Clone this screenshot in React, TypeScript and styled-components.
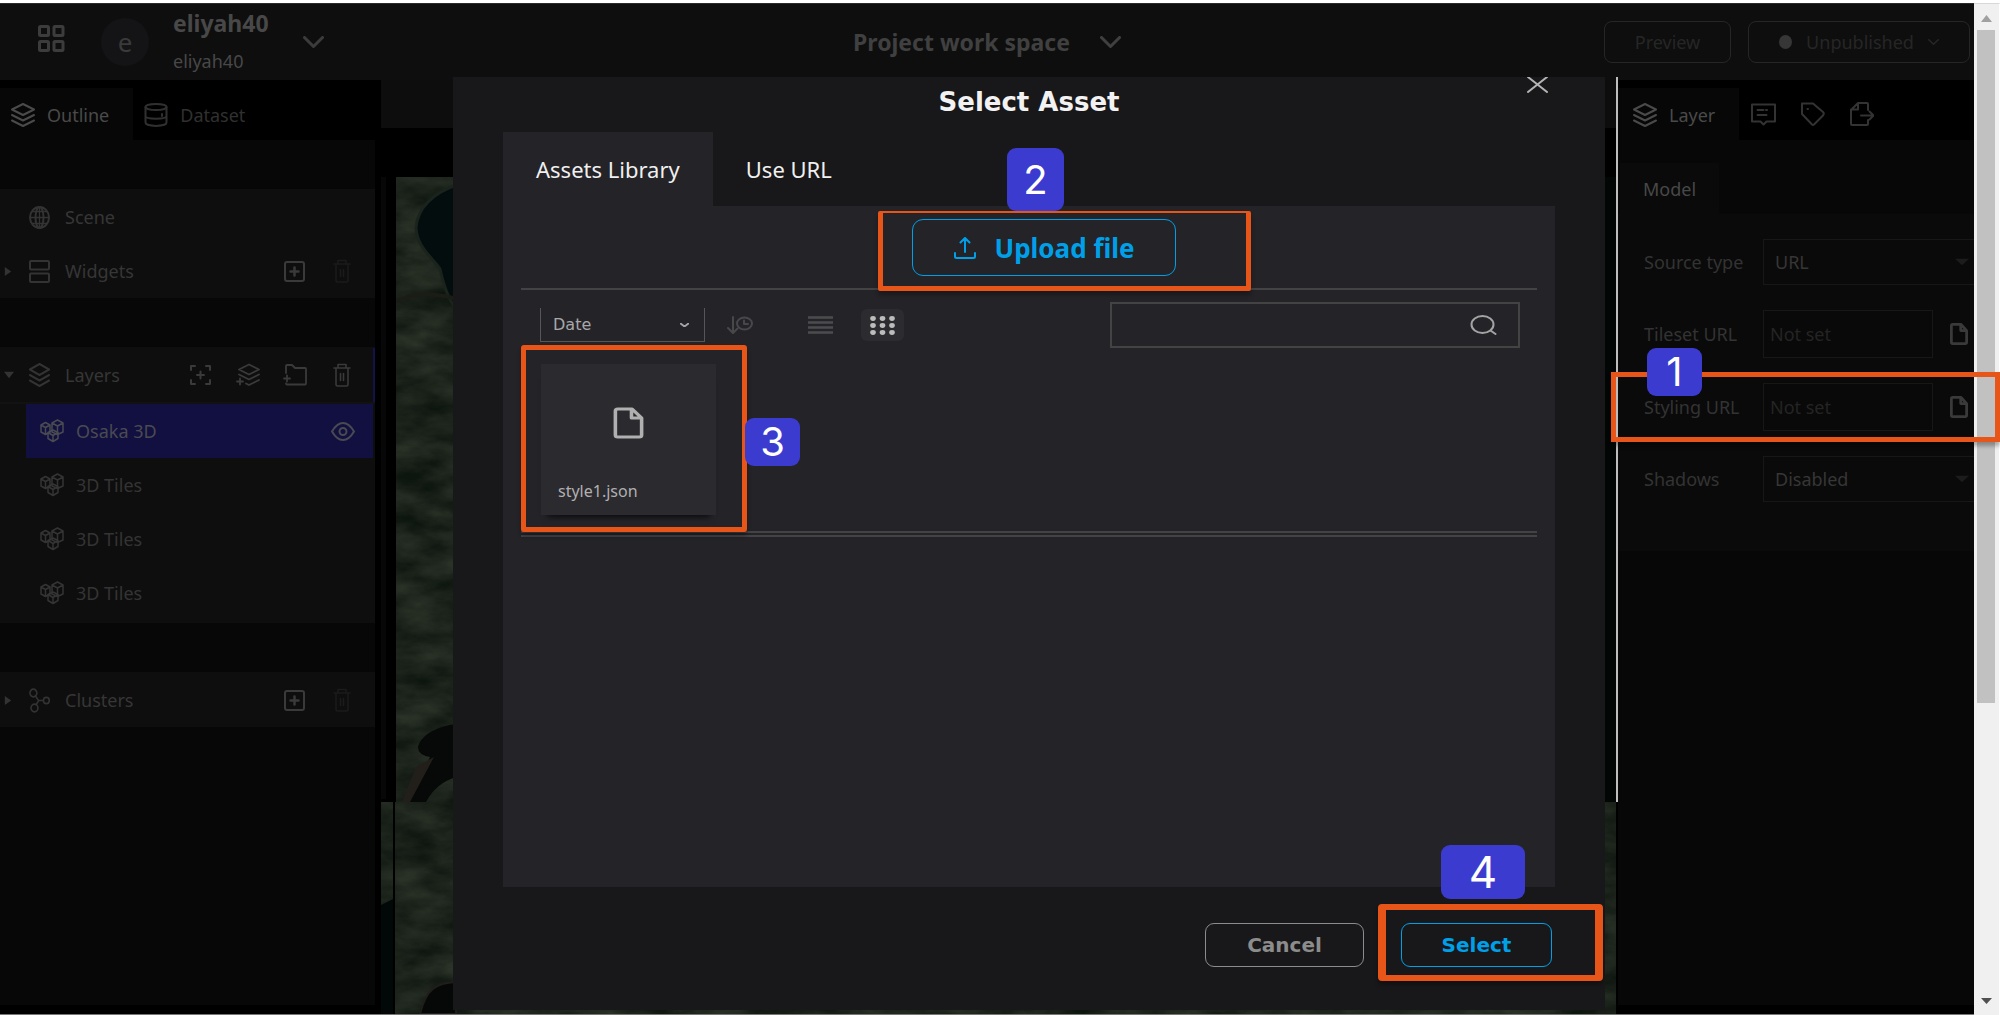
import React from 'react';
import styled, { createGlobalStyle, css } from 'styled-components';

const sans = `'Noto Sans', 'Open Sans', sans-serif`;
const wide = `'DejaVu Sans', 'Noto Sans', sans-serif`;
const orange = '#e85518';
const blue = '#00a0e8';

const GlobalStyle = createGlobalStyle`
  *, *::before, *::after { box-sizing: border-box; }
  body { margin: 0; background: #fff; font-family: ${sans}; }
  button, input, select { font-family: inherit; margin: 0; }
  button { padding: 0; border: 0; background: none; color: inherit; }
  svg { display: block; flex: none; }
`;

/* ---------- page frame ---------- */

const Page = styled.div`
  display: flex;
  min-height: 100vh;
  padding-top: 3px;
`;

const Editor = styled.div`
  position: relative;
  display: flex;
  flex: 1;
  min-width: 0;
  flex-direction: column;
  border-top: 1px solid #2b2b2b;
  border-bottom: 1px solid #777;
  background: #000;
`;

const ScrollTrack = styled.div`
  display: flex;
  flex: 0 0 26px;
  flex-direction: column;
  align-items: center;
  justify-content: space-between;
  padding: 11px 4px 11px 3px;
  border-top: 1px solid #d8d8d8;
  border-right: 1px solid #fff;
  background: #f0f0f0;
`;

const ScrollThumb = styled.div`
  flex: 0 0 68%;
  width: 100%;
  margin: 8px 0 auto;
  background: #c1c1c1;
`;

/* ---------- header ---------- */

const Header = styled.header`
  display: grid;
  grid-template-columns: 1fr auto 1fr;
  align-items: center;
  height: 76px;
  padding: 0 4px;
  background: #0e0e0e;
`;

const HeaderSide = styled.div<{ $end?: boolean }>`
  display: flex;
  align-items: center;
  justify-content: ${(p) => (p.$end ? 'flex-end' : 'flex-start')};
  gap: ${(p) => (p.$end ? '17px' : '0')};
  color: #3c3c3c;
`;

const HomeButton = styled.button`
  margin: 0 0 8px 34px;
`;

const Avatar = styled.span`
  display: flex;
  align-items: center;
  justify-content: center;
  width: 48px;
  height: 48px;
  margin: 0 24px 0 36px;
  border-radius: 50%;
  background: #141417;
  color: #3a3a3a;
  font-size: 26px;
`;

const Names = styled.div`
  display: flex;
  flex-direction: column;
  margin-right: 34px;
  color: #484848;
  font-size: 18px;
  line-height: 38px;

  strong {
    font-size: 23px;
  }
`;

const ProjectName = styled.h1`
  display: flex;
  align-items: center;
  gap: 30px;
  margin: 0;
  color: #404040;
  font-size: 23px;
  line-height: 32px;
`;

const HeaderButton = styled.button<{ $width: number }>`
  display: flex;
  align-items: center;
  justify-content: center;
  gap: 14px;
  width: ${(p) => p.$width}px;
  height: 42px;
  border: 1px solid #262626;
  border-radius: 8px;
  color: #262626;
  font-size: 18px;
`;

const Dot = styled.i`
  width: 13px;
  height: 14px;
  border-radius: 50%;
  background: #363636;
`;

/* ---------- workspace ---------- */

const Workspace = styled.div`
  display: flex;
  flex: 1;
`;

const Sidebar = styled.aside`
  flex: 0 0 381px;
  padding: 0 6px 9px 0;
  display: flex;
  flex-direction: column;
`;

const Inspector = styled.aside`
  position: relative;
  display: flex;
  flex: 0 0 358px;
  flex-direction: column;
  padding: 0 0 9px 2px;

  &::before {
    content: '';
    position: absolute;
    left: 0;
    top: -3px;
    width: 2px;
    height: 725px;
    background: #bdbdbd;
  }
`;

const PanelTabs = styled.nav`
  display: flex;
  height: 60px;
  padding-top: 8px;
`;

const PanelTab = styled.button<{ $active?: boolean; $indent?: number }>`
  display: flex;
  align-items: center;
  gap: 12px;
  padding: 2px 24px 0 ${(p) => p.$indent ?? 11}px;
  background: ${(p) => (p.$active ? '#070707' : 'transparent')};
  color: ${(p) => (p.$active ? '#4a4a4a' : '#303030')};
  font-size: 18px;
`;

const IconTab = styled.button`
  display: flex;
  align-items: center;
  justify-content: center;
  width: 49px;
  color: #333;
`;

const PanelBody = styled.div<{ $top: number }>`
  display: flex;
  flex: 1;
  flex-direction: column;
  gap: 49px;
  padding-top: ${(p) => p.$top}px;
  background: #070707;
`;

const Group = styled.section`
  display: flex;
  flex-direction: column;
  padding-top: 1px;
  background: #0e0e0e;
`;

const TreeRow = styled.div<{ $accent?: boolean }>`
  display: flex;
  align-items: center;
  height: 54px;
  padding: 0 8px 0 4px;
  border-right: 2px solid ${(p) => (p.$accent ? '#14124a' : 'transparent')};
  color: #333;
  font-size: 18px;
`;

const Caret = styled.span`
  width: 25px;
`;

const TreeLabel = styled.span`
  flex: 1;
  margin-left: 15px;
  color: #363636;
`;

const RowButton = styled.button<{ $dim?: boolean }>`
  display: flex;
  align-items: center;
  justify-content: center;
  width: 47px;
  height: 40px;
  color: ${(p) => (p.$dim ? '#1b1b1b' : '#3a3a3a')};
`;

const LayerList = styled.ul`
  margin: 0;
  padding: 0 2px 3px 26px;
  border-top: 2px solid #121212;
  list-style: none;
`;

const LayerItem = styled.li<{ $selected?: boolean }>`
  display: flex;
  align-items: center;
  gap: 12px;
  height: 54px;
  padding: 0 18px 0 14px;
  background: ${(p) => (p.$selected ? '#111040' : 'transparent')};
  color: ${(p) => (p.$selected ? '#4a4a52' : '#343434')};
  font-size: 18px;

  span {
    flex: 1;
  }
`;

const Canvas = styled.main`
  display: flex;
  flex: 1;
  min-width: 0;
  flex-direction: column;
`;

const CanvasBar = styled.div`
  height: 48px;
  margin-bottom: 49px;
  background: #0d0d0d;
`;

const MapFrame = styled.div`
  display: flex;
  flex: 1;

  svg {
    flex: 1;
    width: 100%;
    height: 100%;
  }
`;

/* ---------- inspector form ---------- */

const ModelTab = styled.button`
  height: 51px;
  margin-left: 2px;
  padding: 0 23px;
  background: #0a0a0a;
  color: #484848;
  font-size: 18px;
`;

const Fields = styled.div`
  display: flex;
  flex-direction: column;
  gap: 25px;
  padding: 25px 0 49px 26px;
  background: #0a0a0a;
`;

const Field = styled.div`
  position: relative;
  display: flex;
  align-items: center;
  color: #333;
  font-size: 18px;

  label {
    flex: 0 0 119px;
  }
`;

const FieldInput = styled.input`
  width: 170px;
  height: 48px;
  margin-right: 17px;
  padding: 0 6px;
  border: 1px solid #171717;
  background: #090909;
  color: #333;
  font-size: 18px;

  &::placeholder {
    color: #242424;
    opacity: 1;
  }
`;

const FileButton = styled.button`
  color: #3a3a3a;
`;

const PanelSelectBox = styled.div`
  display: flex;
  flex: 1;
  align-items: center;
  height: 46px;
  padding-right: 5px;
  border: 1px solid #171717;
  border-right: 0;
  color: #1c1c1c;

  select {
    flex: 1;
    min-width: 0;
    padding: 0 11px;
    border: 0;
    outline: 0;
    appearance: none;
    background: transparent;
    color: #363636;
    font-size: 18px;
  }
`;

/* ---------- dialog ---------- */

const Dialog = styled.section`
  position: absolute;
  inset: 73px 369px 4px 453px;
  display: flex;
  flex-direction: column;
  background: #18181a;
`;

const DialogHeader = styled.div`
  display: grid;
  grid-template-columns: 1fr auto 1fr;
  height: 55px;

  h2 {
    grid-column: 2;
    margin: 0;
    color: #f2f2f2;
    font-family: ${wide};
    font-size: 26px;
    line-height: 50px;
  }
`;

const CloseButton = styled.button`
  justify-self: end;
  align-self: start;
  margin-right: 56px;
  color: #b4b4b4;
`;

const DialogTabs = styled.div`
  display: flex;
  height: 74px;
  padding-left: 50px;
`;

const DialogTab = styled.button<{ $active?: boolean }>`
  padding: 0 33px;
  background: ${(p) => (p.$active ? '#242328' : 'transparent')};
  color: #f0f0f0;
  font-size: 22px;
`;

const DialogBody = styled.div`
  display: flex;
  flex: 1;
  flex-direction: column;
  margin: 0 50px;
  padding: 0 18px;
  background: #242328;
`;

const UploadRow = styled.div`
  display: flex;
  justify-content: center;
  height: 84px;
  padding: 13px 0 0 30px;
  border-bottom: 2px solid #434346;
`;

const Anchor = styled.div`
  position: relative;
  align-self: flex-start;
`;

const outlined = css`
  display: flex;
  align-items: center;
  justify-content: center;
  border: 1px solid currentColor;
  font-weight: 700;
`;

const UploadButton = styled.button`
  ${outlined}
  gap: 19px;
  width: 264px;
  height: 57px;
  border-radius: 11px;
  color: ${blue};
  font-size: 26px;
`;

const Toolbar = styled.div`
  display: flex;
  align-items: center;
  padding: 12px 17px 0 19px;
`;

const SortBox = styled.div`
  display: flex;
  align-items: center;
  width: 165px;
  height: 34px;
  margin-right: 22px;
  padding-right: 15px;
  border: 1px solid #55555a;
  border-top: 0;
  color: #a5a5a5;

  select {
    flex: 1;
    padding: 0 0 0 12px;
    border: 0;
    appearance: none;
    background: transparent;
    color: #a8a8a8;
    font-size: 16px;
    font-family: ${wide};
  }
`;

const ViewButtons = styled.div`
  display: flex;
  gap: 19px;
`;

const ToolButton = styled.button<{ $active?: boolean }>`
  display: flex;
  align-items: center;
  justify-content: center;
  width: 43px;
  height: 32px;
  border-radius: 6px;
  background: ${(p) => (p.$active ? '#2c2b30' : 'transparent')};
  color: ${(p) => (p.$active ? '#bcbcbc' : '#4c4c4e')};
`;

const SortOrder = styled.button`
  margin-right: 46px;
  color: #48484b;
`;

const SearchBox = styled.label`
  display: flex;
  align-items: center;
  width: 410px;
  height: 46px;
  margin-left: auto;
  padding-right: 21px;
  border: 2px solid #434344;
  color: #a4a4a4;

  input {
    flex: 1;
    min-width: 0;
    padding: 0 12px;
    border: 0;
    outline: 0;
    background: transparent;
    color: #ccc;
    font-size: 18px;
  }
`;

const AssetGrid = styled.div`
  display: flex;
  padding: 16px 20px;
  border-bottom: 6px double #434346;
`;

const AssetCard = styled.button`
  display: flex;
  flex-direction: column;
  align-items: center;
  width: 175px;
  height: 151px;
  padding: 43px 17px 12px;
  background: #2b2a2f;
  box-shadow: 0 8px 6px -6px rgba(0, 0, 0, 0.7);
  color: #b0b0b0;
  font-size: 16px;
  line-height: 24px;

  span {
    align-self: flex-start;
    margin-top: auto;
  }
`;

const DialogFooter = styled.div`
  display: flex;
  justify-content: flex-end;
  gap: 37px;
  height: 123px;
  padding: 36px 53px 0 0;
`;

const FooterButton = styled.button<{ $primary?: boolean }>`
  ${outlined}
  width: ${(p) => (p.$primary ? 151 : 159)}px;
  height: 44px;
  border-radius: 9px;
  color: ${(p) => (p.$primary ? blue : '#8c8c8c')};
  font-family: ${wide};
  font-size: 20px;
`;

/* ---------- step marks ---------- */

const Highlight = styled.span<{ $inset: string; $width?: string; $radius?: number }>`
  position: absolute;
  inset: ${(p) => p.$inset};
  border: solid ${orange};
  border-width: ${(p) => p.$width ?? '5px'};
  border-radius: ${(p) => p.$radius ?? 0}px;
  box-shadow: 0 4px 4px rgba(0, 0, 0, 0.3);
  pointer-events: none;
`;

const Badge = styled.span<{ $left: number; $top: number; $w: number; $h: number; $size?: number }>`
  position: absolute;
  left: ${(p) => p.$left}px;
  top: ${(p) => p.$top}px;
  display: flex;
  align-items: center;
  justify-content: center;
  width: ${(p) => p.$w}px;
  height: ${(p) => p.$h}px;
  border-radius: 9px;
  background: #3c3bd0;
  color: #fff;
  font: 400 ${(p) => p.$size ?? 40}px / 1 Inter, Roboto, sans-serif;
`;

/* ---------- icons ---------- */

type IconProps = { w: number; h: number; box?: string; sw?: number; children: React.ReactNode };
const Icon = ({ w, h, box, sw = 2, children }: IconProps) => (
  <svg width={w} height={h} viewBox={box ?? `0 0 ${w} ${h}`} preserveAspectRatio="none" fill="none" stroke="currentColor" strokeWidth={sw} strokeLinecap="round" strokeLinejoin="round" aria-hidden="true">
    {children}
  </svg>
);

const Dashboard = () => (
  <Icon w={27} h={27} sw={3}>
    <rect x="1.5" y="1.5" width="9" height="9" rx="1" />
    <rect x="16" y="1.5" width="9" height="9" rx="1" />
    <rect x="1.5" y="16.5" width="9" height="9" rx="1" />
    <rect x="16" y="16.5" width="9" height="9" rx="1" />
  </Icon>
);
const Chevron = ({ w = 21, h = 12, sw = 3 }) => (
  <Icon w={w} h={h} box="0 0 21 12" sw={sw}>
    <path d="M1.5 1.5 10.5 10.5 19.5 1.5" />
  </Icon>
);
const Layers = ({ w = 24, h = 24 }) => (
  <Icon w={w} h={h} box="0 0 24 24">
    <path d="M12 1 23 6.500 12 12 1 6.500Z" />
    <path d="M1 12 12 17.500 23 12M1 17.500 12 23 23 17.500" />
  </Icon>
);
const Database = () => (
  <Icon w={24} h={24}>
    <ellipse cx="12" cy="4" rx="10.500" ry="3" />
    <path d="M1.500 4v15.500c0 4.500 21 4.500 21 0V4M1.500 13c0 3.500 21 3.500 21 0M18 11v2" />
  </Icon>
);
const Globe = () => (
  <Icon w={21} h={23}>
    <ellipse cx="10.500" cy="11.500" rx="9.500" ry="10.500" />
    <ellipse cx="10.500" cy="11.500" rx="4" ry="10.500" />
    <path d="M1 11.500h19M10.500 1v21M3 5.500h15M3 17.500h15" strokeWidth="1.300" />
  </Icon>
);
const Widgets = () => (
  <Icon w={21} h={23}>
    <rect x="1" y="1" width="19" height="8.500" rx="1" />
    <rect x="1" y="13.500" width="19" height="8.500" rx="1" />
  </Icon>
);
const PlusBox = () => (
  <Icon w={21} h={21}>
    <rect x="1" y="1" width="19" height="19" rx="2" />
    <path d="M10.500 6.500v8M6.500 10.500h8" strokeWidth="2.500" />
  </Icon>
);
const Trash = () => (
  <Icon w={18} h={24}>
    <path d="M1 5h16M5 5V1.500h8V5M3 5v16.500q0 1.500 1.500 1.500h9q1.500 0 1.500-1.500V5M7.500 10.500v7M10.500 10.500v7" strokeWidth="1.600" />
  </Icon>
);
const Frame = () => (
  <Icon w={21} h={20}>
    <path d="M1 5V1h4M16 1h4v4M20 15v4h-4M5 19H1v-4M10.500 6.500v7M7 10h7" />
  </Icon>
);
const LayerPlus = () => (
  <Icon w={24} h={24} sw={1.8}>
    <path d="M13 1.500 23 6.500 13 11.500 3 6.500ZM3 11.500 13 16.500 23 11.500M10 20.500l3 1.500 10-5M1 18.500h6M4 15.500v6" />
  </Icon>
);
const FolderPlus = () => (
  <Icon w={24} h={22} sw={1.8}>
    <path d="M3 9V2q0-1 1-1h5l3 3h10q1 0 1 1v14.500q0 1-1 1H4q-1 0-1-1M1 14.500h6M4 11.500v6" />
  </Icon>
);
const Tiles = () => (
  <Icon w={24} h={24} sw={1.5}>
    <path d="M5.500 3.500 10 6v7l-4.500 2.500L1 13V6ZM1 6l4.500 2.500L10 6M5.500 8.500v7" />
    <path d="M17.500 1 23 4v9l-5.500 2.500L12 13V4ZM12 4l5.500 3L23 4M17.500 7v8" />
    <path d="M13 11l5 2.500v6L13 22.500l-5-3v-6ZM8 13.500l5 3 5-3M13 16.500v6" />
  </Icon>
);
const Eye = () => (
  <Icon w={24} h={19}>
    <path d="M1 9.500Q6 1 12 1t11 8.500Q18 18 12 18T1 9.500Z" />
    <circle cx="12" cy="9.500" r="3.500" />
  </Icon>
);
const Cluster = () => (
  <Icon w={21} h={25} box="0 0 23 25" sw={1.7}>
    <circle cx="4.800" cy="5" r="3.800" />
    <circle cx="6" cy="20" r="3.800" />
    <circle cx="19" cy="12.500" r="3.200" />
    <path d="M7 8l3.500 4.500h5M10.500 12.500 8 16.500" />
  </Icon>
);
const Triangle = ({ down = false, w = 8, h = 9 }) => (
  <svg width={down ? h + 1 : w} height={down ? w : h} viewBox="0 0 10 10" preserveAspectRatio="none" fill="currentColor" aria-hidden="true">
    <path d={down ? 'M0 1h10L5 9Z' : 'M1 0l8 5-8 5Z'} />
  </svg>
);
const Comment = () => (
  <Icon w={25} h={24}>
    <path d="M1 2.500h23v17h-8.500l-3 3-3-3H1ZM6.500 8h6M15 8h1M6.500 13h9" />
  </Icon>
);
const Tag = () => (
  <Icon w={24} h={24}>
    <path d="M1 1.500h11L22 10q1.500 1.500 0 3.500L13 22.500Q12 23.500 11 22.500L1 12ZM6.500 7h.5" />
  </Icon>
);
const Export = () => (
  <Icon w={24} h={24}>
    <path d="M18 18v4q0 1-1 1H2q-1 0-1-1V8l7-7h9q1 0 1 1v6M8 1v6.500H1M11 13.500h12M19.500 9.500l4 4-4 4" />
  </Icon>
);
const FileIcon = ({ w = 18, h = 22, sw = 4 }) => (
  <Icon w={w} h={h} box="0 0 26 32" sw={sw}>
    <path d="M4 2h12L24 11v17q0 2-2 2H4q-2 0-2-2V4Q2 2 4 2ZM15.500 2v9h8" />
  </Icon>
);
const Upload = () => (
  <Icon w={22} h={22}>
    <path d="M1 16v3.500q0 1.500 1.500 1.500h17q1.500 0 1.500-1.500V16M11 15V1.500M6.500 5.500 11 1l4.500 4.500" />
  </Icon>
);
const SortClock = () => (
  <Icon w={26} h={18}>
    <path d="M6 1v15M1 12l5 5 4.500-4.500" />
    <ellipse cx="17.500" cy="7.500" rx="7.500" ry="6" />
    <path d="M17 4.500v3.500h4" />
  </Icon>
);
const ListLines = () => (
  <Icon w={25} h={18}>
    <path d="M0 1.500h25M0 6.500h25M0 11.500h25M0 16.500h25" strokeLinecap="butt" strokeWidth="2.500" />
  </Icon>
);
const DotGrid = () => (
  <svg width="25" height="19" viewBox="0 0 25 19" fill="currentColor" aria-hidden="true">
    {[2.5, 9.5, 16.5].map((y) => [3, 12.5, 22].map((x) => <ellipse key={`${x}-${y}`} cx={x} cy={y} rx="2.800" ry="2.400" />))}
  </svg>
);
const Search = () => (
  <Icon w={27} h={20}>
    <ellipse cx="12.500" cy="9.500" rx="11" ry="8.500" />
    <path d="M20.500 15.500 25.500 19" />
  </Icon>
);
const Close = () => (
  <Icon w={23} h={16}>
    <path d="M2 0 21 15M21 0 2 15" />
  </Icon>
);

const SatelliteMap = () => (
  <svg viewBox="-15 0 1235 837" preserveAspectRatio="xMinYMin slice" aria-hidden="true">
    <defs>
      <filter id="terrain" x="0" y="0" width="100%" height="100%">
        <feTurbulence type="fractalNoise" baseFrequency="0.020 0.045" numOctaves="5" seed="7" />
        <feColorMatrix values="0 0 0 0 0.160  0 0 0 0 0.180  0 0 0 0 0.120  1 0 0 0 -0.200" />
      </filter>
    </defs>
    <rect x="-15" width="1235" height="837" fill="#0d150f" />
    <rect x="-15" width="1235" height="837" filter="url(#terrain)" opacity="0.500" />
    <path d="M60 8C38 16 22 30 20 50C20 70 38 82 44 92C48 110 52 122 60 132Z" fill="#040d0e" stroke="#1b241c" strokeWidth="3" />
    <path d="M0 124Q28 112 60 122" fill="none" stroke="#1c1c16" strokeWidth="4" />
    <path d="M60 547C44 549 26 556 22 570Q22 578 34 580L12 625H30Q40 606 60 600Z" fill="#060907" />
    <path d="M38 580 14 625H6L20 590Z" fill="#221f1b" />
    <path d="M60 805C40 806 30 812 24 837H60Z" fill="#050807" stroke="#201e1a" strokeWidth="2" />
    <rect x="1145" width="75" height="625" fill="#020705" />
    <rect x="-15" width="15" height="625" fill="#000" />
    <rect x="-15" width="5" height="622" fill="#070707" />
    <path d="M-15 728-3 722V837H-15Z" fill="#020807" />
    <rect x="-3" y="625" width="2" height="212" fill="#000" />
  </svg>
);

/* ---------- sections ---------- */

const layerNames = ['Osaka 3D', '3D Tiles', '3D Tiles', '3D Tiles'];

const OutlinePanel = () => (
  <Sidebar>
    <PanelTabs>
      <PanelTab $active><Layers /> Outline</PanelTab>
      <PanelTab><Database /> Dataset</PanelTab>
    </PanelTabs>
    <PanelBody $top={49}>
      <Group>
        <TreeRow><Caret /><Globe /><TreeLabel>Scene</TreeLabel></TreeRow>
        <TreeRow>
          <Caret><Triangle /></Caret><Widgets /><TreeLabel>Widgets</TreeLabel>
          <RowButton aria-label="Add widget"><PlusBox /></RowButton>
          <RowButton $dim aria-label="Delete widget"><Trash /></RowButton>
        </TreeRow>
      </Group>
      <Group>
        <TreeRow $accent>
          <Caret><Triangle down /></Caret><Layers w={21} /><TreeLabel>Layers</TreeLabel>
          <RowButton aria-label="Frame layer"><Frame /></RowButton>
          <RowButton aria-label="Add layer"><LayerPlus /></RowButton>
          <RowButton aria-label="Add folder"><FolderPlus /></RowButton>
          <RowButton aria-label="Delete layer"><Trash /></RowButton>
        </TreeRow>
        <LayerList>
          {layerNames.map((name, i) => (
            <LayerItem key={i} $selected={i === 0}>
              <Tiles /><span>{name}</span>{i === 0 && <Eye />}
            </LayerItem>
          ))}
        </LayerList>
      </Group>
      <Group>
        <TreeRow>
          <Caret><Triangle /></Caret><Cluster /><TreeLabel>Clusters</TreeLabel>
          <RowButton aria-label="Add cluster"><PlusBox /></RowButton>
          <RowButton $dim aria-label="Delete cluster"><Trash /></RowButton>
        </TreeRow>
      </Group>
    </PanelBody>
  </Sidebar>
);

const SelectField = ({ id, label, value }: { id: string; label: string; value: string }) => (
  <Field>
    <label htmlFor={id}>{label}</label>
    <PanelSelectBox>
      <select id={id} defaultValue={value}><option>{value}</option></select>
      <Triangle down w={8} h={13} />
    </PanelSelectBox>
  </Field>
);

const UrlField = ({ id, label, children }: { id: string; label: string; children?: React.ReactNode }) => (
  <Field>
    <label htmlFor={id}>{label}</label>
    <FieldInput id={id} placeholder="Not set" />
    <FileButton aria-label={`Choose file for ${label}`}><FileIcon /></FileButton>
    {children}
  </Field>
);

const LayerPanel = () => (
  <Inspector>
    <PanelTabs>
      <PanelTab $active $indent={15}><Layers /> Layer</PanelTab>
      <IconTab aria-label="Infobox"><Comment /></IconTab>
      <IconTab aria-label="Tags"><Tag /></IconTab>
      <IconTab aria-label="Export"><Export /></IconTab>
    </PanelTabs>
    <PanelBody $top={23}>
      <div>
        <ModelTab>Model</ModelTab>
        <Fields>
          <SelectField id="source" label="Source type" value="URL" />
          <UrlField id="tileset" label="Tileset URL" />
          <UrlField id="styling" label="Styling URL">
            <Highlight $inset="-11px -26px -11px -33px" />
            <Badge $left={3} $top={-35} $w={55} $h={48}>1</Badge>
          </UrlField>
          <SelectField id="shadows" label="Shadows" value="Disabled" />
        </Fields>
      </div>
    </PanelBody>
  </Inspector>
);

const AssetDialog = () => (
  <Dialog role="dialog" aria-labelledby="dialog-title">
    <DialogHeader>
      <h2 id="dialog-title">Select Asset</h2>
      <CloseButton aria-label="Close"><Close /></CloseButton>
    </DialogHeader>
    <DialogTabs>
      <DialogTab $active>Assets Library</DialogTab>
      <DialogTab>Use URL</DialogTab>
    </DialogTabs>
    <DialogBody>
      <UploadRow>
        <Anchor>
          <UploadButton><Upload /> Upload file</UploadButton>
          <Highlight $inset="-8px -75px -15px -34px" $width="2px 5px 5px" $radius={2} />
          <Badge $left={95} $top={-71} $w={57} $h={63}>2</Badge>
        </Anchor>
      </UploadRow>
      <Toolbar>
        <SortBox>
          <select aria-label="Sort by" defaultValue="Date"><option>Date</option></select>
          <Chevron w={9} h={4} sw={5} />
        </SortBox>
        <SortOrder aria-label="Reverse order"><SortClock /></SortOrder>
        <ViewButtons>
          <ToolButton aria-label="List view"><ListLines /></ToolButton>
          <ToolButton $active aria-label="Grid view"><DotGrid /></ToolButton>
        </ViewButtons>
        <SearchBox>
          <input type="text" aria-label="Search assets" />
          <Search />
        </SearchBox>
      </Toolbar>
      <AssetGrid>
        <Anchor>
          <AssetCard><FileIcon w={31} h={32} sw={3} /><span>style1.json</span></AssetCard>
          <Highlight $inset="-19px -31px -17px -20px" $radius={3} />
          <Badge $left={204} $top={54} $w={55} $h={48}>3</Badge>
        </Anchor>
      </AssetGrid>
    </DialogBody>
    <DialogFooter>
      <FooterButton>Cancel</FooterButton>
      <Anchor>
        <FooterButton $primary>Select</FooterButton>
        <Highlight $inset="-19px -51px -14px -23px" $width="6px 8px" $radius={4} />
        <Badge $left={40} $top={-78} $w={84} $h={54} $size={44}>4</Badge>
      </Anchor>
    </DialogFooter>
  </Dialog>
);

export default function App() {
  return (
    <>
      <GlobalStyle />
      <Page>
        <Editor>
          <Header>
            <HeaderSide>
              <HomeButton aria-label="Dashboard"><Dashboard /></HomeButton>
              <Avatar>e</Avatar>
              <Names><strong>eliyah40</strong><span>eliyah40</span></Names>
              <Chevron />
            </HeaderSide>
            <ProjectName>Project work space <Chevron /></ProjectName>
            <HeaderSide $end>
              <HeaderButton $width={127}>Preview</HeaderButton>
              <HeaderButton $width={222}><Dot />Unpublished <Chevron w={11} h={6} /></HeaderButton>
            </HeaderSide>
          </Header>
          <Workspace>
            <OutlinePanel />
            <Canvas>
              <CanvasBar />
              <MapFrame><SatelliteMap /></MapFrame>
            </Canvas>
            <LayerPanel />
          </Workspace>
          <AssetDialog />
        </Editor>
        <ScrollTrack aria-hidden="true">
          <svg width="11" height="7" viewBox="0 0 11 7" fill="#a0a0a0"><path d="M0 7 5.500 0 11 7Z" /></svg>
          <ScrollThumb />
          <svg width="11" height="6" viewBox="0 0 11 6" fill="#505050"><path d="M0 0h11L5.500 6Z" /></svg>
        </ScrollTrack>
      </Page>
    </>
  );
}
